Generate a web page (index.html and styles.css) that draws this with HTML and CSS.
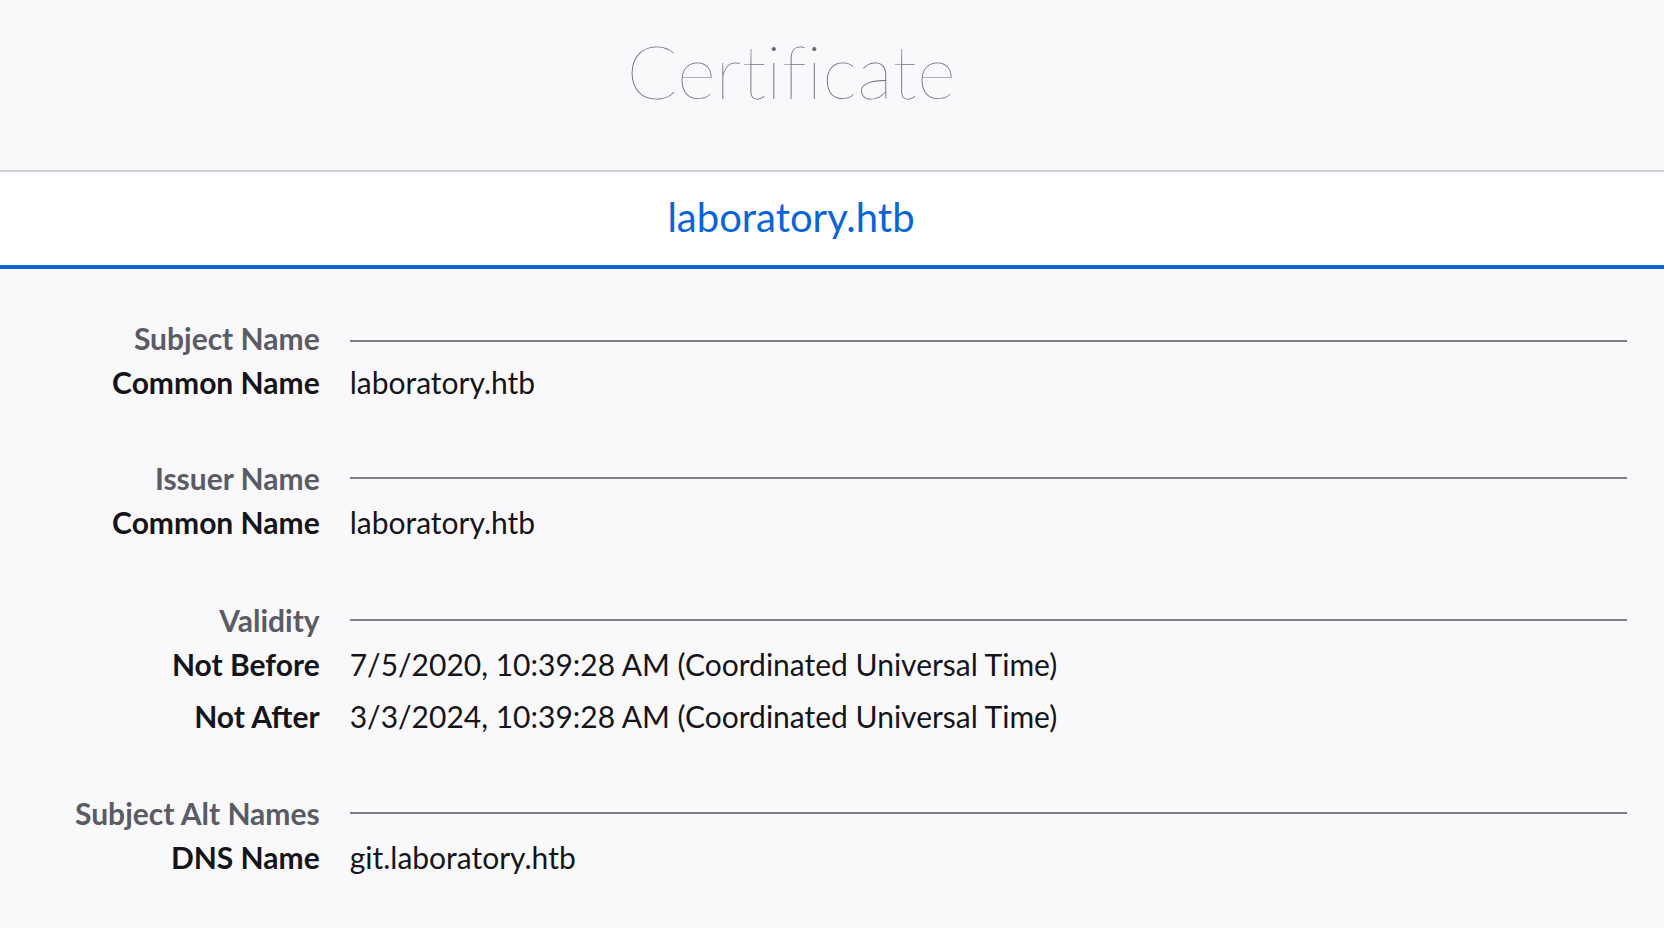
FILE: index.html
```html
<!DOCTYPE html>
<html>
<head>
<meta charset="utf-8">
<title>Certificate</title>
<link rel="stylesheet" href="styles.css">
</head>
<body>
<header class="page-header">
  <h1 class="title">Certificate</h1>
</header>
<nav class="tabs">
  <div class="tab selected">laboratory.htb</div>
</nav>
<main class="info">
  <section class="group">
    <div class="group-title"><span class="label">Subject Name</span><span class="rule"></span></div>
    <div class="row"><span class="key">Common Name</span><span class="val">laboratory.htb</span></div>
  </section>
  <section class="group issuer">
    <div class="group-title"><span class="label">Issuer Name</span><span class="rule"></span></div>
    <div class="row"><span class="key">Common Name</span><span class="val">laboratory.htb</span></div>
  </section>
  <section class="group validity">
    <div class="group-title"><span class="label">Validity</span><span class="rule"></span></div>
    <div class="row"><span class="key">Not Before</span><span class="val">7/5/2020, 10:39:28 AM (Coordinated Universal Time)</span></div>
    <div class="row next-date"><span class="key">Not After</span><span class="val">3/3/2024, 10:39:28 AM (Coordinated Universal Time)</span></div>
  </section>
  <section class="group alt-names">
    <div class="group-title"><span class="label">Subject Alt Names</span><span class="rule"></span></div>
    <div class="row"><span class="key">DNS Name</span><span class="val">git.laboratory.htb</span></div>
  </section>
</main>
</body>
</html>
```
FILE: styles.css
```css
html, body {
  margin: 0;
  padding: 0;
  background: #f9f9fb;
  font-family: Lato, "Open Sans", sans-serif;
  color: #15141a;
}
.page-header {
  height: 170px;
  border-bottom: 2px solid #cfcfd8;
  display: flex;
  justify-content: center;
  align-items: center;
  padding-right: 82px;
}
.title {
  margin: 0;
  font-size: 75px;
  font-weight: 100;
  color: #6e6e78;
  line-height: 1;
  padding-bottom: 30px;
  font-variant-ligatures: none;
}
.tabs {
  background: #ffffff;
  height: 93px;
  border-bottom: 4px solid #0a64d6;
  display: flex;
  justify-content: center;
  align-items: center;
  padding-right: 82px;
}
.tab {
  font-size: 40px;
  color: #0a64d6;
  padding-bottom: 4px;
}
.info {
  padding: 47px 37px 0 75px;
  display: grid;
  grid-template-columns: max-content 1fr;
  column-gap: 30px;
  font-size: 30px;
}
.group,
.group-title,
.row {
  display: contents;
}
.group-title .label {
  text-align: right;
  color: #5b5b66;
  font-weight: 700;
  line-height: 44px;
}
.rule {
  align-self: center;
  height: 2px;
  background: #7f7f88;
  margin-top: 5px;
}
.key {
  text-align: right;
  font-weight: 700;
  line-height: 44px;
}
.val {
  line-height: 44px;
}
.next-date .key,
.next-date .val {
  margin-top: 8px;
}
.issuer .label,
.issuer .rule {
  margin-top: 52px;
}
.validity .label,
.validity .rule {
  margin-top: 54px;
}
.alt-names .label,
.alt-names .rule {
  margin-top: 53px;
}
```
